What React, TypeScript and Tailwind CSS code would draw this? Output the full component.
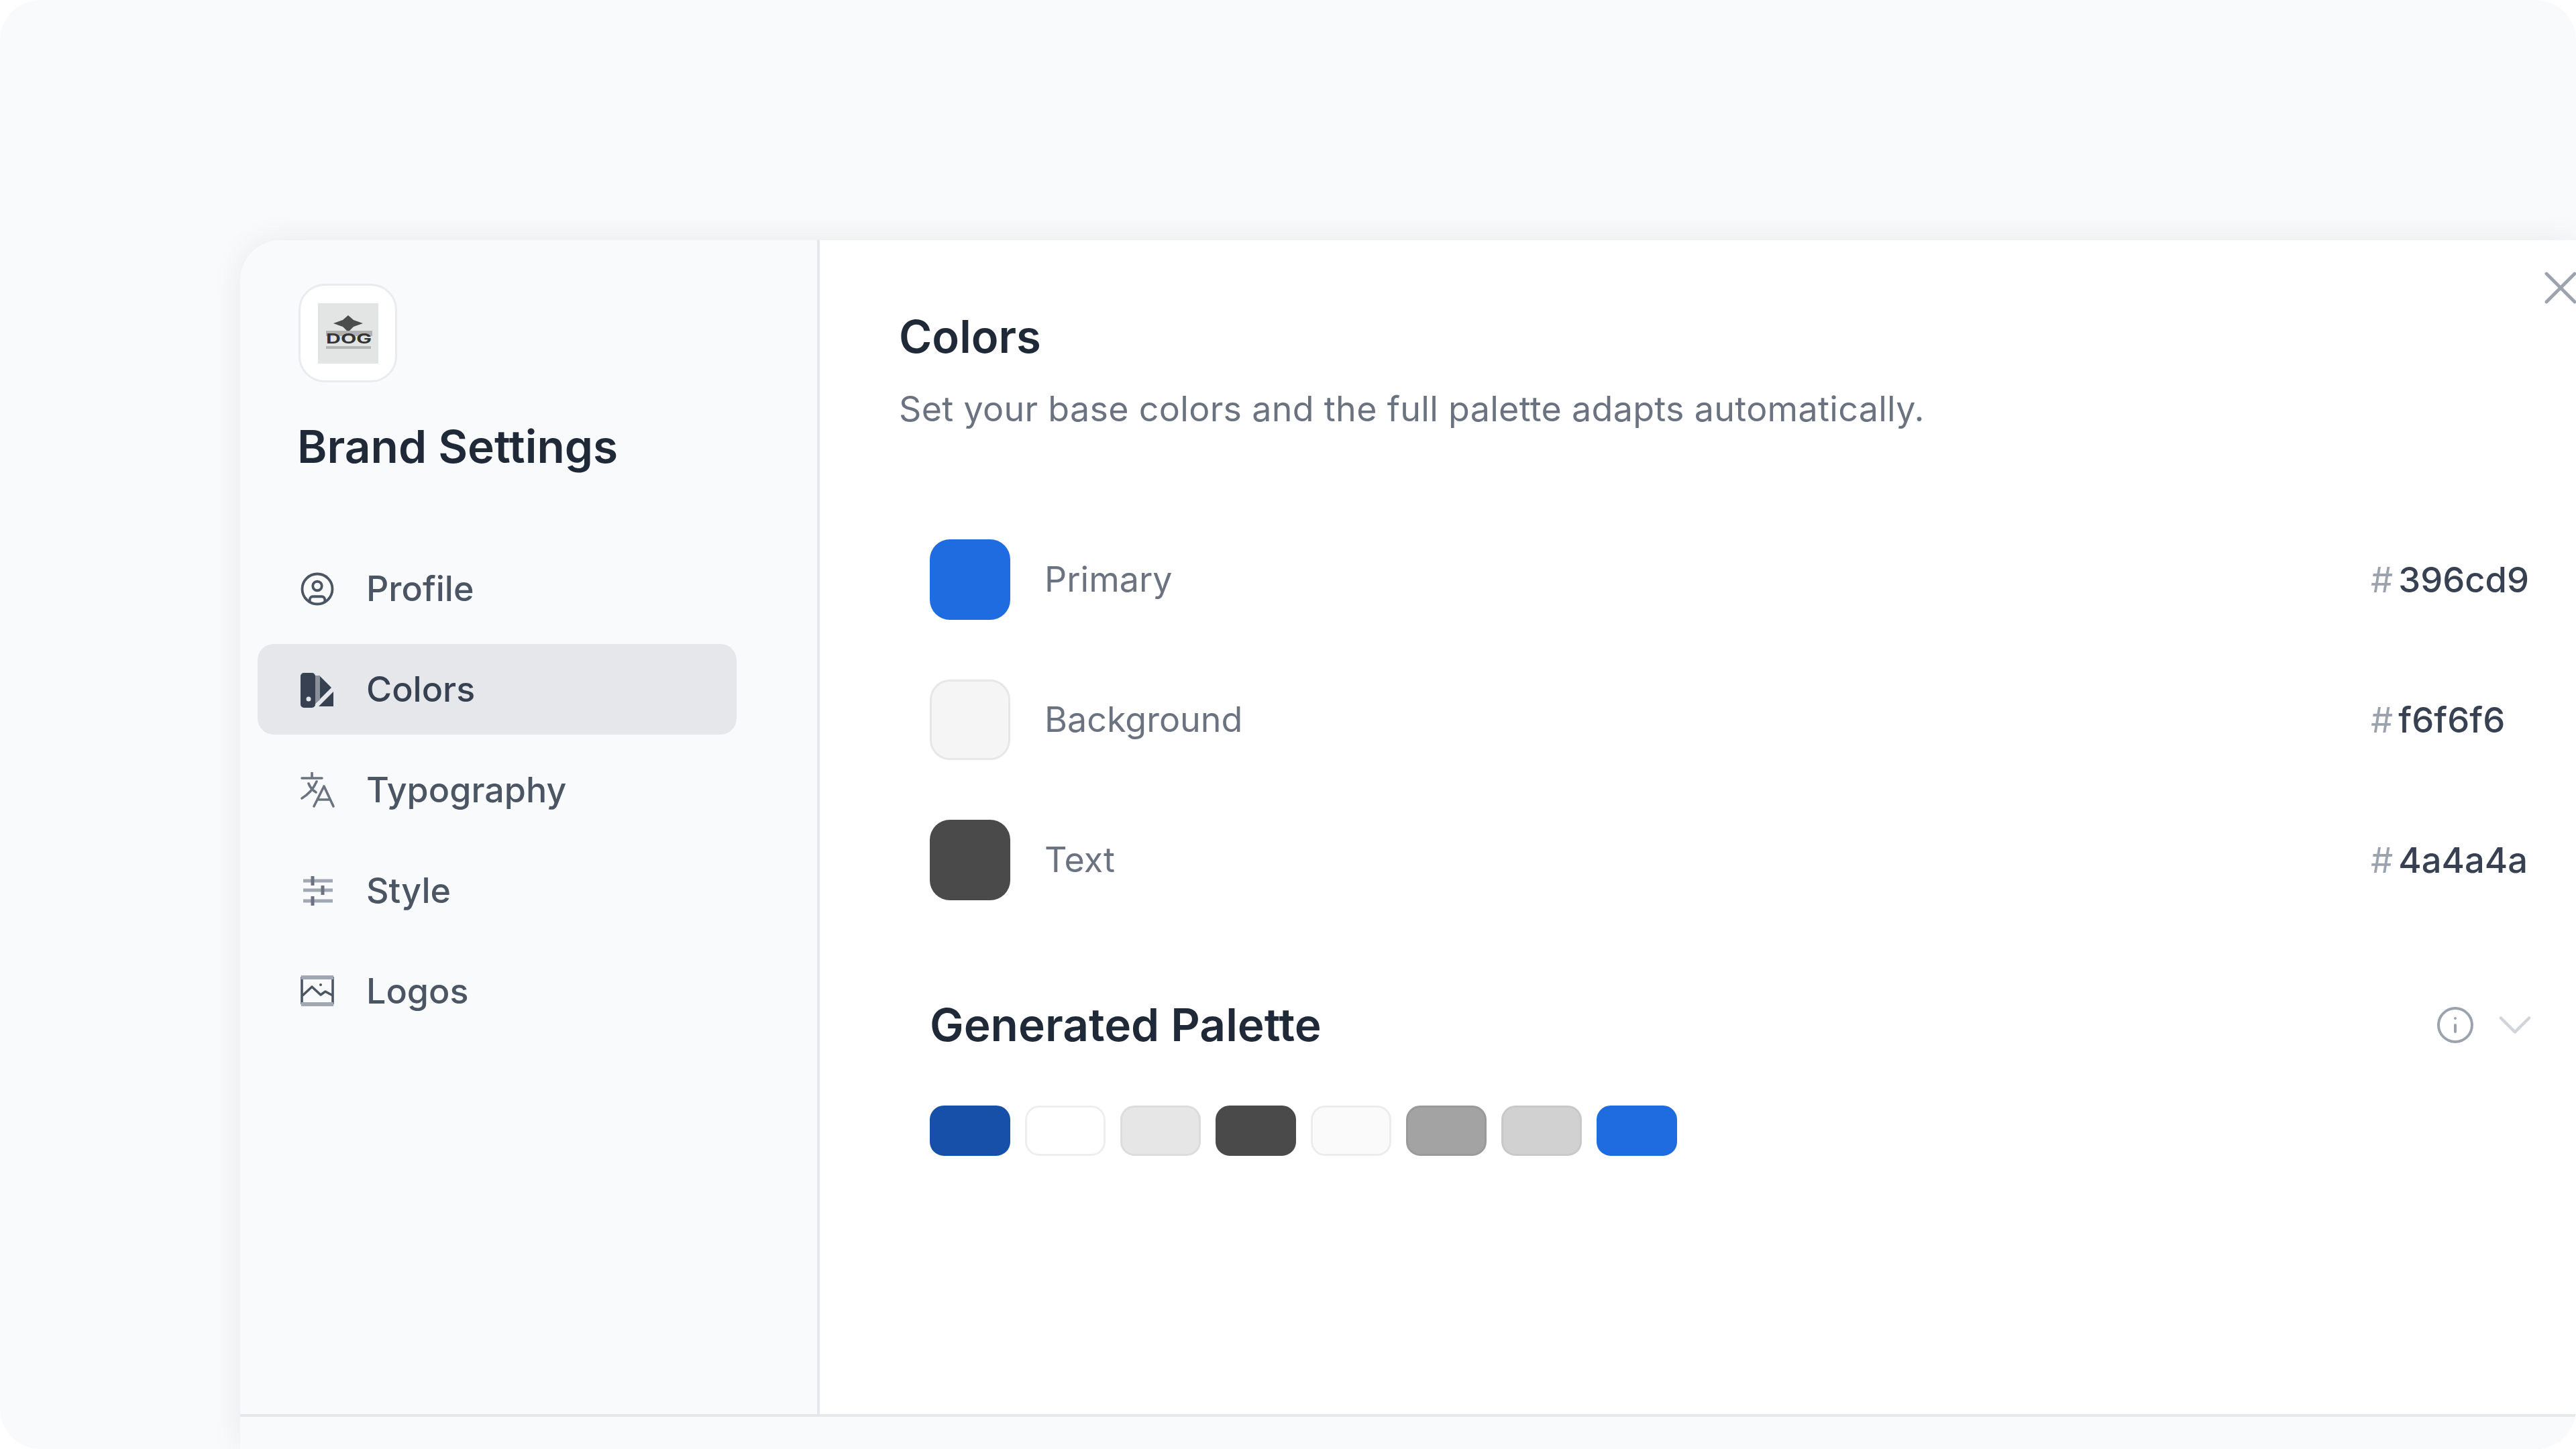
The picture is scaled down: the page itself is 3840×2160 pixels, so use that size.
import { ChevronDown, CircleUser, Info, X } from 'lucide-react';

function ColorsIcon() {
    return (
        <svg viewBox="0 0 54 54" className="w-[54px] h-[54px]" fill="#374151">
            <path fillRule="evenodd" d="M2 7a5 5 0 0 1 5-5h12a5 5 0 0 1 5 5v42a5 5 0 0 1-5 5H7a5 5 0 0 1-5-5V7zm12 30.5a3.5 3.5 0 1 0 0 7 3.5 3.5 0 0 0 0-7z" />
            <path d="M24 6h6l18 18-24 24V6z" />
            <path d="M24 6h7v36l-7 6V6z" fill="#8b919c" />
            <path d="M51 30v22H29l22-22z" />
        </svg>
    );
}

function TypographyIcon() {
    return (
        <svg viewBox="0 0 54 54" className="w-[54px] h-[54px]" fill="none" stroke="#6b7280" strokeWidth="3.6" strokeLinecap="round" strokeLinejoin="round">
            <path d="M4 9h30M19 1v8M26 14C22 23 14 33 4 39M14 17c2 5 6 10 11 13" />
            <path d="M22 51l15-30 14 30M28 41h18" />
        </svg>
    );
}

function StyleIcon() {
    return (
        <svg viewBox="0 0 54 54" className="w-[54px] h-[54px]" fill="none" stroke="#6b7280" strokeWidth="5">
            <path d="M6 12h44M6 26h44M6 42h44" stroke="#a2a8b3" />
            <path d="M20 5v14M35 19v14M20 35v14" />
        </svg>
    );
}

function LogosIcon() {
    return (
        <svg viewBox="0 0 54 54" className="w-[54px] h-[54px]" fill="none" stroke="#4b5563" strokeWidth="3.6" strokeLinejoin="round">
            <path d="M4 5v41M50 5v41" />
            <path d="M3 6h48M3 46h48" stroke="#a2a8b3" strokeWidth="6" />
            <path d="M5 33l14-13 13 12 7-5 11 6" />
            <circle cx="32" cy="17" r="2" fill="#4b5563" stroke="none" />
        </svg>
    );
}

function BrandMark() {
    return (
        <svg viewBox="0 0 90 90" className="w-[90px] h-[90px]">
            <rect width="90" height="90" fill="#e2e5e3" />
            <path d="M45 18l8 7 14 5-14 5-8 8-8-8-14-5 14-5z" fill="#4a4d4c" />
            <rect x="12" y="41" width="69" height="8" fill="#b0b2b1" />
            <text x="12" y="60" fontSize="20" fontWeight="700" fontFamily="Inter, sans-serif" fill="#333333" textLength="68" lengthAdjust="spacingAndGlyphs">DOG</text>
            <rect x="12" y="64" width="67" height="4" fill="#b4b6b5" />
        </svg>
    );
}

const nav = [
    { label: 'Profile', icon: <CircleUser className="w-[54px] h-[54px] text-[#4b5563]" strokeWidth={1.7} /> },
    { label: 'Colors', icon: <ColorsIcon />, active: true },
    { label: 'Typography', icon: <TypographyIcon /> },
    { label: 'Style', icon: <StyleIcon /> },
    { label: 'Logos', icon: <LogosIcon /> },
];

const baseColors = [
    { label: 'Primary', value: '396cd9', swatch: 'bg-[#1f6be0]' },
    { label: 'Background', value: 'f6f6f6', swatch: 'bg-[#f5f5f5] border-[3px] border-[#e7e7e7]' },
    { label: 'Text', value: '4a4a4a', swatch: 'bg-[#4a4a4a]' },
];

const palette = [
    'bg-[#1650a8] border-[#1650a8]',
    'bg-white border-[#eeeeee]',
    'bg-[#e6e6e6] border-[#dcdcdc]',
    'bg-[#4a4a4a] border-[#4a4a4a]',
    'bg-[#fafafa] border-[#ececec]',
    'bg-[#a3a3a3] border-[#9a9a9a]',
    'bg-[#d1d1d1] border-[#c8c8c8]',
    'bg-[#1f6be0] border-[#1f6be0]',
];

export default function App() {
    return (
        <div className="w-[3840px] h-[2160px] bg-white overflow-hidden font-[Inter,sans-serif]">
            <div className="h-full rounded-[60px] bg-[#f9fafb] pl-[358px] pt-[358px] overflow-hidden">
                <div className="h-full flex flex-col rounded-tl-[60px] bg-[#f9fafb] shadow-[0_0_48px_rgba(0,0,0,0.07)]">
                    <div className="h-[1750px] flex shrink-0">
                        <aside className="w-[864px] shrink-0 border-r-[4px] border-[#e5e7eb] pt-[65px] pl-[26px]">
                            <div className="ml-[61px] w-[147px] h-[147px] rounded-[39px] border-[3px] border-[#e9ebee] bg-white flex items-center justify-center">
                                <BrandMark />
                            </div>
                            <h1 className="ml-[59px] mt-[56px] text-[67.6px] leading-[80px] font-semibold text-[#1f2937]">Brand Settings</h1>
                            <nav className="mt-[104px] w-[714px] flex flex-col gap-[15px]">
                                {nav.map((item) => (
                                    <div
                                        key={item.label}
                                        className={`h-[135px] flex items-center gap-[46px] pl-[62px] rounded-[24px] ${item.active ? 'bg-[#e5e7eb] text-[#374151]' : 'text-[#4b5563]'}`}
                                    >
                                        {item.icon}
                                        <span className="text-[52px] font-medium">{item.label}</span>
                                    </div>
                                ))}
                            </nav>
                        </aside>

                        <main className="flex-1 relative bg-white pt-[102px] pl-[118px]">
                            <button className="absolute top-[29px] right-[-19px] text-[#9ca3af]">
                                <X className="w-[84px] h-[84px]" strokeWidth={1.4} />
                            </button>
                            <h2 className="text-[67px] leading-[84px] font-semibold text-[#1f2937]">Colors</h2>
                            <p className="mt-[30px] text-[52px] leading-[72px] text-[#6b7280] tracking-[0.3px]">Set your base colors and the full palette adapts automatically.</p>

                            <div className="mt-[158px] ml-[46px] flex flex-col gap-[89px]">
                                {baseColors.map((c) => (
                                    <div key={c.label} className="flex items-center">
                                        <div className={`w-[120px] h-[120px] rounded-[30px] ${c.swatch}`} />
                                        <span className="ml-[51px] flex-1 text-[52px] text-[#6b7280]">{c.label}</span>
                                        <span className="w-[306px] flex items-center gap-[8px] text-[52.5px] font-medium text-[#374151]">
                                            <span className="text-[#9ca3af] font-normal">#</span>
                                            {c.value}
                                        </span>
                                    </div>
                                ))}
                            </div>

                            <div className="mt-[144px] ml-[46px] flex items-center pr-[49px]">
                                <h3 className="flex-1 text-[67.6px] leading-[84px] font-semibold text-[#1f2937]">Generated Palette</h3>
                                <Info className="w-[60px] h-[60px] text-[#9ca3af]" strokeWidth={1.6} />
                                <ChevronDown className="ml-[17px] w-[84px] h-[84px] text-[#d1d5db]" strokeWidth={1.3} />
                            </div>

                            <div className="mt-[78px] ml-[46px] flex gap-[22px]">
                                {palette.map((p) => (
                                    <div key={p} className={`w-[120px] h-[75px] rounded-[21px] border-[3px] ${p}`} />
                                ))}
                            </div>
                        </main>
                    </div>
                    <div className="flex-1 border-t-[4px] border-[#e5e7eb]" />
                </div>
            </div>
        </div>
    );
}
